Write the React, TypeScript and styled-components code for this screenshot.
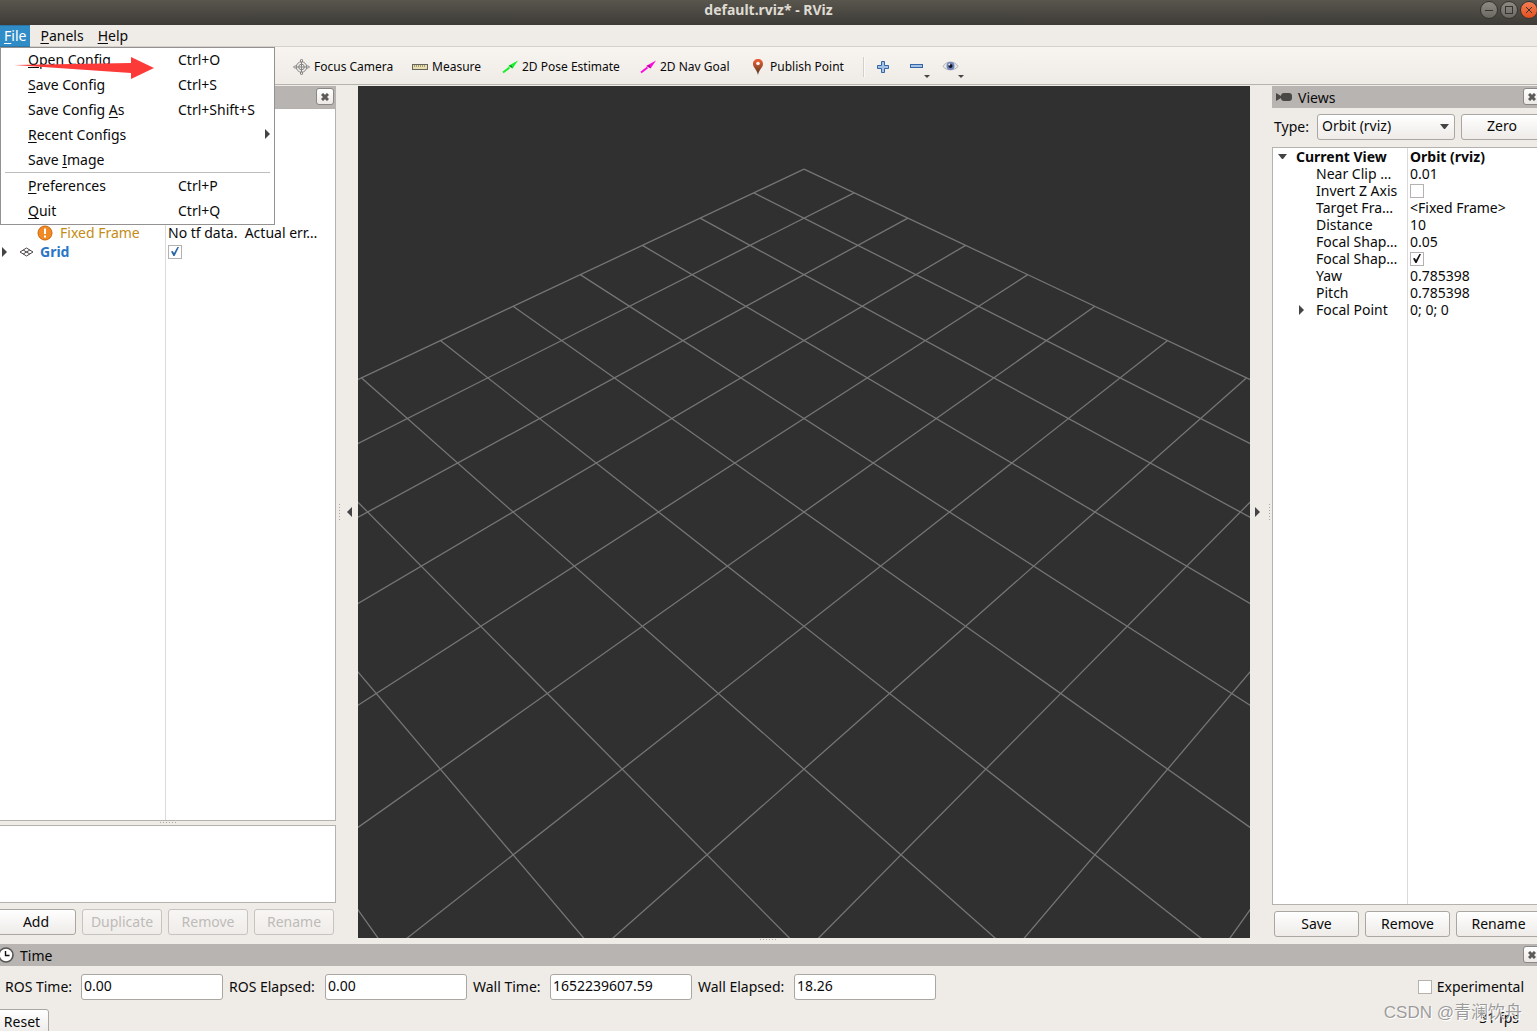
import React, { useState } from "react";
import styled, { createGlobalStyle } from "styled-components";

const Global = createGlobalStyle`
  html, body, #root { height: 100%; margin: 0; }
  body { overflow: hidden; }
  * { box-sizing: border-box; }
  body, button, input, select {
    font-family: "Noto Sans", "Open Sans", "Noto Sans CJK SC", sans-serif;
    font-size: 14px;
    line-height: 17px;
    color: #0a0a0a;
  }
`;

const Window = styled.div`
  height: 100vh;
  display: flex;
  flex-direction: column;
  overflow: hidden;
  background: #efebe7;
  white-space: nowrap;
`;

const TitleBar = styled.header`
  flex: none;
  height: 25px;
  display: grid;
  grid-template-columns: 1fr auto 1fr;
  align-items: center;
  padding-bottom: 5px;
  background: linear-gradient(#59564e, #3d3b37);
`;

const Title = styled.h1`
  grid-column: 2;
  margin: 0;
  font-size: 14px;
  line-height: 20px;
  font-weight: 700;
  color: #dfdbd2;
`;

const WindowButtons = styled.div`
  display: flex;
  justify-content: flex-end;
  gap: 2px;
  margin-right: -1px;
`;

const WindowButton = styled.button<{ $close?: boolean }>`
  width: 18px;
  height: 18px;
  padding: 0;
  display: grid;
  place-items: center;
  border: 1px solid #35332f;
  border-radius: 50%;
  color: #35332f;
  background: ${(p) => (p.$close ? "linear-gradient(#f37e53, #e2501f)" : "linear-gradient(#8e8b83, #6b6861)")};
`;

const MenuBar = styled.nav`
  position: relative;
  z-index: 2;
  flex: none;
  height: 22px;
  display: flex;
  gap: 6px;
  border-bottom: 1px solid #d5d1cc;
`;

const MenuTitle = styled.button<{ $open?: boolean }>`
  height: 22px;
  padding: 0 4px 2px;
  border: 1px solid ${(p) => (p.$open ? "#2a76a8" : "transparent")};
  border-width: 1px 0;
  background: ${(p) => (p.$open ? "#308cc6" : "transparent")};
  color: ${(p) => (p.$open ? "#ffffff" : "#0a0a0a")};
`;

const Key = styled.span`
  text-decoration: underline;
  text-underline-offset: 2px;
  text-decoration-skip-ink: none;
`;

const Menu = styled.div`
  position: absolute;
  top: 22px;
  left: 0;
  width: 275px;
  background: #ffffff;
  border: 1px solid #949290;
`;

const MenuItem = styled.button`
  width: 100%;
  height: 24px;
  display: grid;
  grid-template-columns: 150px 1fr auto;
  align-items: center;
  margin: 0 0 1px;
  padding: 0 4px 2px 27px;
  border: 0;
  background: transparent;
  text-align: left;
`;

const MenuRule = styled.hr`
  height: 1px;
  margin: -1px 4px 1px;
  border: 0;
  background: #bfbdbb;
`;

const Annotation = styled.svg`
  position: absolute;
  top: 8px;
  left: 12px;
  pointer-events: none;
`;

const ToolBar = styled.div`
  flex: none;
  height: 39px;
  padding-left: 292px;
  display: flex;
  align-items: center;
  background: linear-gradient(#f8f5f1, #efebe7 35px, #efebe7);
  box-shadow: inset 0 -1px #efebe7, inset 0 -2px #b6b2ad;
`;

const Tool = styled.button<{ $width: number }>`
  flex: none;
  width: ${(p) => p.$width}px;
  display: flex;
  align-items: center;
  gap: 3px;
  padding: 0;
  border: 0;
  background: transparent;
  font-size: 12px;
`;

const ToolRule = styled.span`
  width: 2px;
  height: 20px;
  margin-right: 11px;
  background: linear-gradient(90deg, #d3cfca 1px, #fbf9f7 1px);
`;

const IconTool = styled.button`
  flex: none;
  width: 33px;
  height: 28px;
  padding: 0;
  display: flex;
  align-items: center;
  border: 0;
  background: transparent;
`;

const Workspace = styled.main`
  flex: 1;
  min-height: 0;
  display: flex;
`;

const Dock = styled.section<{ $width: number; $bleed?: number }>`
  flex: none;
  width: ${(p) => p.$width}px;
  margin-right: ${(p) => -(p.$bleed ?? 0)}px;
  display: flex;
  flex-direction: column;
`;

const DockHeader = styled.header<{ $left?: number }>`
  flex: none;
  height: 22px;
  display: flex;
  align-items: center;
  gap: 5px;
  padding: 0 2px 0 ${(p) => p.$left ?? 4}px;
  background: #b8b4b1;
`;

const DockTitle = styled.h2`
  flex: 1;
  margin: 0;
  font-size: 14px;
  line-height: 17px;
  font-weight: 400;
`;

const CloseButton = styled.button`
  flex: none;
  align-self: flex-start;
  width: 18px;
  height: 17px;
  margin-top: 2px;
  padding: 0;
  display: grid;
  place-items: center;
  border: 1px solid #8b8885;
  border-radius: 3px;
  background: linear-gradient(#ffffff, #ece9e6);
`;

const TreeFrame = styled.div<{ $flush?: boolean }>`
  flex: 1;
  min-height: 0;
  display: flex;
  border: 1px solid #b4b1ae;
  ${(p) => p.$flush && "border-left: 0;"}
  background: #ffffff;
`;

const Tree = styled.table<{ $label: number }>`
  width: 100%;
  height: 100%;
  table-layout: fixed;
  border-collapse: separate;
  border-spacing: 0;
  th, td {
    height: 17px;
    padding: 0;
    font-weight: 400;
    text-align: left;
    vertical-align: middle;
  }
  th { width: ${(p) => p.$label}px; border-right: 1px solid #dcdad8; }
  td { padding-left: 2px; }
`;

const Row = styled.tr<{ $strong?: boolean; $tall?: boolean; $color?: string }>`
  && th, && td { font-weight: ${(p) => (p.$strong ? 700 : 400)}; ${(p) => p.$tall && "height: 19px;"} }
  th { color: ${(p) => p.$color ?? "inherit"}; }
`;

const Filler = styled.tr<{ $height?: number }>`
  && th, && td { height: ${(p) => (p.$height ? p.$height + "px" : "auto")}; }
`;

const Label = styled.div<{ $indent: number }>`
  display: grid;
  grid-template-columns: ${(p) => p.$indent}px 1fr;
  align-items: center;
`;

const Marker = styled.div<{ $from: number }>`
  display: flex;
  align-items: center;
  padding-left: ${(p) => p.$from}px;
  gap: 12px;
`;

const Check = styled.input<{ $mark?: string }>`
  appearance: none;
  display: grid;
  place-items: center;
  flex: none;
  width: 14px;
  height: 14px;
  margin: 0;
  border: 1px solid #b4b1ae;
  background: #ffffff;
  &:checked::after {
    content: "";
    width: 8px;
    height: 9px;
    background: ${(p) => p.$mark ?? "#111111"};
    clip-path: polygon(0 50%, 22% 44%, 38% 68%, 80% 0, 100% 0, 45% 100%, 30% 100%);
  }
`;

const Gutter = styled.div<{ $flip?: boolean }>`
  flex: none;
  width: 22px;
  display: flex;
  flex-direction: ${(p) => (p.$flip ? "row-reverse" : "row")};
  align-items: center;
  justify-content: space-between;
  padding: ${(p) => (p.$flip ? "0 2px 0 5px" : "0 6px 0 3px")};
`;

const Grip = styled.div<{ $vertical?: boolean }>`
  flex: none;
  align-self: ${(p) => (p.$vertical ? "center" : "flex-start")};
  width: ${(p) => (p.$vertical ? 1 : 17)}px;
  height: ${(p) => (p.$vertical ? 17 : 1)}px;
  background: repeating-linear-gradient(${(p) => (p.$vertical ? "180deg" : "90deg")}, #aaa7a3 0 1px, transparent 1px 3px);
`;

const GripBar = styled.div<{ $height: number }>`
  flex: none;
  height: ${(p) => p.$height}px;
  padding-top: 1px;
  display: flex;
  justify-content: center;
`;

const Scene = styled.svg`
  flex: 1;
  min-width: 0;
  height: 100%;
  background: #303030;
`;

const Description = styled.div`
  flex: none;
  height: 78px;
  border: 1px solid #b4b1ae;
  border-left: 0;
  background: #ffffff;
`;

const Buttons = styled.div<{ $left: number; $height: number }>`
  flex: none;
  height: ${(p) => p.$height}px;
  display: flex;
  align-items: flex-start;
  gap: 6px;
  padding: 6px 2px 0 ${(p) => p.$left}px;
`;

const Button = styled.button`
  flex: 1;
  min-width: 0;
  height: 26px;
  padding: 0 0 2px;
  border: 1px solid #aaa7a3;
  border-radius: 3px;
  background: linear-gradient(#ffffff, #eeebe8);
  &:disabled { color: #bebbb8; border-color: #c6c3c0; background: linear-gradient(#f8f6f4, #efece9); }
`;

const AddButton = styled(Button)`
  flex: none;
  width: 80px;
  margin-left: -4px;
`;

const ResetButton = styled(Button)`
  flex: none;
  width: 54px;
  margin-left: -5px;
`;

const TypeRow = styled.div`
  flex: none;
  height: 39px;
  display: flex;
  align-items: center;
  padding: 0 0 2px 2px;
  label { width: 43px; }
`;

const SelectBox = styled.div`
  flex: none;
  width: 138px;
  margin-right: 6px;
  display: grid;
  align-items: center;
  svg { grid-area: 1 / 1; justify-self: end; margin-right: 6px; pointer-events: none; }
`;

const Select = styled.select`
  grid-area: 1 / 1;
  appearance: none;
  width: 100%;
  height: 26px;
  padding: 0 4px 2px;
  border: 1px solid #aaa7a3;
  border-radius: 3px;
  background: linear-gradient(#ffffff, #eeebe8);
`;

const TimeDock = styled.section`
  flex: none;
  height: 87px;
  margin-right: -6px;
`;

const TimeRow = styled.div`
  height: 43px;
  display: flex;
  align-items: center;
  padding: 0 19px 2px 5px;
`;

const Field = styled.label<{ $width: number }>`
  display: grid;
  grid-template-columns: ${(p) => p.$width}px 142px;
  align-items: center;
  margin-right: 6px;
`;

const TextBox = styled.input`
  width: 100%;
  height: 26px;
  padding: 0 3px 2px 2px;
  border: 1px solid #aaa7a3;
  border-radius: 3px;
  background: #ffffff;
`;

const CheckLabel = styled.label`
  display: flex;
  align-items: center;
  gap: 5px;
  margin-left: auto;
`;

const Status = styled.div`
  position: relative;
  display: flex;
  justify-content: space-between;
  align-items: flex-start;
  padding-right: 24px;
`;

const Watermark = styled.span`
  position: absolute;
  right: 21px;
  top: -8px;
  font-family: "Liberation Sans", "Noto Sans CJK SC", sans-serif;
  font-size: 17px;
  line-height: 24px;
  color: rgba(140, 140, 140, 0.85);
  text-shadow: 1px 1px #ffffff;
`;

type Dir = "left" | "right" | "down";
const arrows: Record<Dir, { width: number; height: number; path: string }> = {
  left: { width: 5, height: 10, path: "M5 0V10L0 5Z" },
  right: { width: 5, height: 10, path: "M0 0V10L5 5Z" },
  down: { width: 9, height: 5, path: "M0 0H9L5 5H4Z" },
};

const Arrow = ({ dir }: { dir: Dir }) => (
  <svg width={arrows[dir].width} height={arrows[dir].height} fill="#444444">
    <path d={arrows[dir].path} />
  </svg>
);

const Cross = () => (
  <svg width="8" height="8" viewBox="0 0 8 8" stroke="#5c5a58" strokeWidth="3">
    <path d="M1 1L7 7M7 1L1 7" />
  </svg>
);

const FocusIcon = () => (
  <svg width="19" height="18" viewBox="0 0 19 18" fill="none" stroke="#858585">
    <circle cx="9.5" cy="9" r="5.2" />
    <circle cx="9.5" cy="9" r="2.8" />
    <path d="M5 9H14M9.5 4V14" />
    <path d="M8.5 4V2L9.5 1L10.500 2V4M8.500 14V16L9.500 17L10.500 16V14M4.500 8H2.500L1.500 9L2.500 10H4.500M14.500 8H16.500L17.500 9L16.500 10H14.500" />
  </svg>
);

const RulerIcon = () => (
  <svg width="18" height="8" viewBox="0 0 18 8">
    <rect x="1.500" y="1.500" width="15" height="5" fill="#e9dfae" stroke="#66645a" />
    <path d="M3.500 2V4M5.500 2V4M7.500 2V4M9.500 2V4M11.500 2V4M13.500 2V4" stroke="#a19c7c" />
  </svg>
);

const PoseIcon = ({ color, dark }: { color: string; dark: string }) => (
  <svg width="18" height="16" viewBox="0 0 18 16">
    <path d="M2 13.500L8.500 8.500" stroke={color} strokeWidth="2" />
    <path d="M7 7L17 1.500L11.500 9.500Z" fill={color} />
    <path d="M8 6.500L11.800 9.300L10.500 6.500Z" fill={dark} />
  </svg>
);

const PinIcon = () => (
  <svg width="16" height="18" viewBox="0 0 16 18">
    <defs>
      <linearGradient id="pin" x1="0" y1="0" x2="0" y2="1">
        <stop offset="0.1" stopColor="#e85a31" />
        <stop offset="0.9" stopColor="#5c3a24" />
      </linearGradient>
    </defs>
    <path d="M7 1C4 1 2 3 2 6C2 9.500 6 11.500 7 17C8 11.500 12 9.500 12 6C12 3 10 1 7 1Z" fill="url(#pin)" />
    <circle cx="7" cy="5.500" r="1.800" fill="#f8f5f1" />
  </svg>
);

const PlusIcon = () => (
  <svg width="14" height="14" viewBox="0 0 14 14">
    <path d="M5.500 1.500H8.500V5.500H12.500V8.500H8.500V12.500H5.500V8.500H1.500V5.500H5.500Z" fill="#a4c2e6" stroke="#3465a4" />
  </svg>
);

const MinusIcon = () => (
  <svg width="22" height="24" viewBox="0 0 22 24">
    <rect x="1.500" y="9.500" width="12" height="3" fill="#a4c2e6" stroke="#3465a4" />
    <path d="M15 20H21L18 23Z" fill="#444444" />
  </svg>
);

const EyeIcon = () => (
  <svg width="23" height="24" viewBox="0 0 23 24">
    <path d="M1 11.500C4 5.500 13 5.500 16 11.500C12 16 5 16 1 11.500Z" fill="#ececec" stroke="#b0b0b0" />
    <circle cx="8.500" cy="11" r="4" fill="#6f82b8" />
    <circle cx="8.500" cy="11" r="2" fill="#101020" />
    <circle cx="7.300" cy="9.600" r="1" fill="#e6ebfa" />
    <path d="M16 20H22L19 23Z" fill="#444444" />
  </svg>
);

const CameraIcon = () => (
  <svg width="17" height="10" viewBox="0 0 17 10" fill="#4a4846">
    <path d="M0 1L5 4V6L0 9Z" />
    <rect x="5" y="1" width="11" height="8" rx="3" />
  </svg>
);

const ClockIcon = () => (
  <svg width="15" height="16" viewBox="0 0 15 16">
    <circle cx="6" cy="8" r="7" fill="#ffffff" stroke="#555553" strokeWidth="1.600" />
    <path d="M5.500 4V8.500H9.500" fill="none" stroke="#111111" strokeWidth="1.400" />
  </svg>
);

const WarningIcon = () => (
  <svg width="16" height="16" viewBox="0 0 16 16">
    <circle cx="8" cy="8" r="7" fill="#f08a24" stroke="#c9660d" />
    <path d="M8 3.500V9M8 10.500V12.500" stroke="#ffffff" strokeWidth="2" />
  </svg>
);

const GridIcon = () => (
  <svg width="15" height="10" viewBox="0 0 15 10" fill="none" stroke="#4a4846">
    <path d="M1 5L7.500 1L14 5L7.500 9ZM4.200 3L10.800 7M10.800 3L4.200 7" />
  </svg>
);

const CELLS = 10;
const ORBIT = 10;
const FOCAL = 1028.5;

/* Projects a ground-plane grid corner through a camera at 45° yaw and pitch. */
const project = (i: number, j: number) => {
  const rise = (CELLS - i - j) / 2;
  const depth = ORBIT + rise;
  return [(FOCAL * (i - j) * Math.SQRT1_2) / depth, (-FOCAL * rise) / depth].map((n) => n.toFixed(2)).join(" ");
};

const gridPath = Array.from({ length: CELLS + 1 }, (_, n) =>
  `M${project(n, 0)}L${project(n, CELLS)}M${project(0, n)}L${project(CELLS, n)}`
).join("");

const tools = [
  { label: "Focus Camera", width: 119, icon: <FocusIcon /> },
  { label: "Measure", width: 90, icon: <RulerIcon /> },
  { label: "2D Pose Estimate", width: 138, icon: <PoseIcon color="#19f02c" dark="#0b7a1a" /> },
  { label: "2D Nav Goal", width: 112, icon: <PoseIcon color="#fb0bd8" dark="#8a0a78" /> },
  { label: "Publish Point", width: 112, icon: <PinIcon /> },
];

const menuItems = [
  { parts: ["", "O", "pen Config"], keys: "Ctrl+O" },
  { parts: ["", "S", "ave Config"], keys: "Ctrl+S" },
  { parts: ["Save Config ", "A", "s"], keys: "Ctrl+Shift+S" },
  { parts: ["", "R", "ecent Configs"], sub: true },
  { parts: ["Save ", "I", "mage"] },
  { rule: true, parts: ["", "P", "references"], keys: "Ctrl+P" },
  { parts: ["", "Q", "uit"], keys: "Ctrl+Q" },
];

const viewProps: { name: string; value?: string; checked?: boolean; expandable?: boolean }[] = [
  { name: "Near Clip …", value: "0.01" },
  { name: "Invert Z Axis", checked: false },
  { name: "Target Fra…", value: "<Fixed Frame>" },
  { name: "Distance", value: "10" },
  { name: "Focal Shap…", value: "0.05" },
  { name: "Focal Shap…", checked: true },
  { name: "Yaw", value: "0.785398" },
  { name: "Pitch", value: "0.785398" },
  { name: "Focal Point", value: "0; 0; 0", expandable: true },
];

const times = [
  { label: "ROS Time:", value: "0.00", width: 76 },
  { label: "ROS Elapsed:", value: "0.00", width: 96 },
  { label: "Wall Time:", value: "1652239607.59", width: 77 },
  { label: "Wall Elapsed:", value: "18.26", width: 96 },
];

export default function App() {
  const [open, setOpen] = useState(true);
  return (
    <Window>
      <Global />
      <TitleBar>
        <Title>default.rviz* - RViz</Title>
        <WindowButtons>
          <WindowButton aria-label="Minimize">
            <svg width="8" height="8" stroke="currentColor"><path d="M0 4.500H8" /></svg>
          </WindowButton>
          <WindowButton aria-label="Maximize">
            <svg width="8" height="8" stroke="currentColor" fill="none"><rect x="0.500" y="0.500" width="7" height="7" /></svg>
          </WindowButton>
          <WindowButton $close aria-label="Close window">
            <svg width="8" height="8" stroke="currentColor"><path d="M1 1L7 7M7 1L1 7" /></svg>
          </WindowButton>
        </WindowButtons>
      </TitleBar>

      <MenuBar>
        <MenuTitle $open={open} onClick={() => setOpen(!open)}><Key>F</Key>ile</MenuTitle>
        <MenuTitle><Key>P</Key>anels</MenuTitle>
        <MenuTitle><Key>H</Key>elp</MenuTitle>
        {open && (
          <Menu>
            {menuItems.map((m) => (
              <React.Fragment key={m.parts.join("")}>
                {m.rule && <MenuRule />}
                <MenuItem>
                  <span>{m.parts[0]}<Key>{m.parts[1]}</Key>{m.parts[2]}</span>
                  <span>{m.keys}</span>
                  {m.sub && <Arrow dir="right" />}
                </MenuItem>
              </React.Fragment>
            ))}
            <Annotation width="144" height="26" viewBox="0 0 144 26">
              <path d="M1 9L118 7V1L141 12L118 23V17Z" fill="#fc3a38" />
            </Annotation>
          </Menu>
        )}
      </MenuBar>

      <ToolBar>
        {tools.map((t) => (
          <Tool key={t.label} $width={t.width}>{t.icon}{t.label}</Tool>
        ))}
        <ToolRule />
        <IconTool aria-label="Add tool"><PlusIcon /></IconTool>
        <IconTool aria-label="Remove tool"><MinusIcon /></IconTool>
        <IconTool aria-label="Visibility"><EyeIcon /></IconTool>
      </ToolBar>

      <Workspace>
        <Dock $width={336}>
          <DockHeader>
            <DockTitle />
            <CloseButton aria-label="Close displays"><Cross /></CloseButton>
          </DockHeader>
          <TreeFrame $flush>
            <Tree $label={166}>
              <tbody>
                <Filler $height={114}><th /><td /></Filler>
                <Row $tall $color="#c48c14">
                  <th><Label $indent={60}><Marker $from={37}><WarningIcon /></Marker><span>Fixed Frame</span></Label></th>
                  <td>No tf data.&nbsp; Actual err…</td>
                </Row>
                <Row $tall $color="#2a76c6">
                  <th><Label $indent={40}><Marker $from={2}><Arrow dir="right" /><GridIcon /></Marker><b>Grid</b></Label></th>
                  <td><Check type="checkbox" aria-label="Grid" defaultChecked $mark="#2a66a8" /></td>
                </Row>
                <Filler><th /><td /></Filler>
              </tbody>
            </Tree>
          </TreeFrame>
          <GripBar $height={4}><Grip /></GripBar>
          <Description />
          <Buttons $left={0} $height={35}>
            <AddButton>Add</AddButton>
            <Button disabled>Duplicate</Button>
            <Button disabled>Remove</Button>
            <Button disabled>Rename</Button>
          </Buttons>
        </Dock>

        <Gutter><Grip $vertical /><Arrow dir="left" /></Gutter>
        <Scene viewBox="-446 -426 892 852" preserveAspectRatio="xMidYMid slice">
          <path d={gridPath} fill="none" stroke="#757575" strokeWidth="1.300" />
        </Scene>
        <Gutter $flip><Grip $vertical /><Arrow dir="right" /></Gutter>

        <Dock $width={271} $bleed={6}>
          <DockHeader>
            <CameraIcon />
            <DockTitle>Views</DockTitle>
            <CloseButton aria-label="Close views"><Cross /></CloseButton>
          </DockHeader>
          <TypeRow>
            <label htmlFor="type">Type:</label>
            <SelectBox>
              <Select id="type"><option>Orbit (rviz)</option></Select>
              <Arrow dir="down" />
            </SelectBox>
            <Button>Zero</Button>
          </TypeRow>
          <TreeFrame>
            <Tree $label={135}>
              <tbody>
                <Row $strong>
                  <th><Label $indent={23}><Marker $from={5}><Arrow dir="down" /></Marker><span>Current View</span></Label></th>
                  <td>Orbit (rviz)</td>
                </Row>
                {viewProps.map((p, n) => (
                  <Row key={n}>
                    <th>
                      <Label $indent={43}>
                        <Marker $from={26}>{p.expandable && <Arrow dir="right" />}</Marker>
                        <span>{p.name}</span>
                      </Label>
                    </th>
                    <td>
                      {p.value ?? <Check type="checkbox" aria-label={p.name} defaultChecked={p.checked} />}
                    </td>
                  </Row>
                ))}
                <Filler><th /><td /></Filler>
              </tbody>
            </Tree>
          </TreeFrame>
          <Buttons $left={2} $height={33}>
            <Button>Save</Button>
            <Button>Remove</Button>
            <Button>Rename</Button>
          </Buttons>
        </Dock>
      </Workspace>

      <GripBar $height={6}><Grip /></GripBar>
      <TimeDock>
        <DockHeader $left={0}>
          <ClockIcon />
          <DockTitle>Time</DockTitle>
          <CloseButton aria-label="Close time"><Cross /></CloseButton>
        </DockHeader>
        <TimeRow>
          {times.map((t) => (
            <Field key={t.label} $width={t.width}>
              {t.label}
              <TextBox defaultValue={t.value} />
            </Field>
          ))}
          <CheckLabel><Check type="checkbox" />Experimental</CheckLabel>
        </TimeRow>
        <Status>
          <ResetButton>Reset</ResetButton>
          <output>31 fps</output>
          <Watermark>CSDN @青澜饮舟</Watermark>
        </Status>
      </TimeDock>
    </Window>
  );
}
